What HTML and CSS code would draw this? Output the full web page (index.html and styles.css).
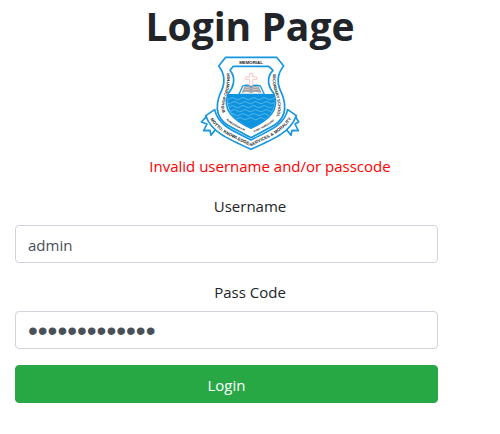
FILE: index.html
```html
<!DOCTYPE html>
<html lang="en">
<head>
<meta charset="utf-8">
<meta name="viewport" content="width=device-width, initial-scale=1">
<title>Login Page</title>
<link rel="stylesheet" href="styles.css">
</head>
<body>
<main class="container">
  <h1 class="title">Login Page</h1>
  <svg class="crest" viewBox="15 18 303 285" role="img" aria-label="School crest">
    <defs>
      <path id="left-side" d="M91 186C76 158 114 123 102 62"/>
      <path id="right-side" d="M235 71C225 123 262 147 244 200"/>
      <path id="lower-left" d="M94 210Q118 232 166 249"/>
      <path id="lower-right" d="M178 247Q218 230 250 203"/>
      <path id="motto" d="M46 207C68 248 118 263 168 289C218 263 268 248 298 192"/>
      <clipPath id="inner"><path d="M98 132H239C246 183 220 211 168 233C116 211 91 183 98 132Z"/></clipPath>
    </defs>
    <g class="outline">
      <path d="M35 199L19 216L36 222L26 242L45 241L48 256L62 238Z"/>
      <path d="M301 199L311 216L300 222L310 242L291 241L288 256L274 238Z"/>
      <path d="M92 22H245L266 48C242 77 246 104 261 132C279 178 265 209 239 225L168 263L97 225C71 209 57 178 75 132C90 104 94 77 71 48Z"/>
      <path d="M59 179L32 197C49 244 92 264 168 298C244 264 287 244 304 197L278 179C267 228 221 242 168 270C115 242 70 228 59 179Z"/>
      <path d="M66 176C73 224 122 236 168 263C214 236 263 224 270 176" class="fold"/>
      <path d="M115 49H221L234 61C211 85 221 112 236 130C257 180 220 211 168 235C116 211 79 180 100 130C115 112 125 85 105 61Z"/>
    </g>
    <g clip-path="url(#inner)">
      <path class="water" d="M90 132H250V240H90Z"/>
      <g class="waves">
        <path d="M88 146q8 7 16 0t16 0 16 0 16 0 16 0 16 0 16 0 16 0 16 0 16 0"/>
        <path d="M94 158q8 7 16 0t16 0 16 0 16 0 16 0 16 0 16 0 16 0 16 0"/>
        <path d="M88 170q8 7 16 0t16 0 16 0 16 0 16 0 16 0 16 0 16 0 16 0"/>
        <path d="M94 182q8 7 16 0t16 0 16 0 16 0 16 0 16 0 16 0 16 0 16 0"/>
        <path d="M88 194q8 7 16 0t16 0 16 0 16 0 16 0 16 0 16 0 16 0 16 0"/>
        <path d="M110 206q8 7 16 0t16 0 16 0 16 0 16 0 16 0 16 0"/>
      </g>
    </g>
    <path class="book-cover" d="M132 133L143 108Q156 103 168 109Q181 103 196 108L208 133Z"/>
    <path class="book-page" d="M142 127L149 111Q158 107 168 113Q179 107 190 111L198 127Q181 121 168 127Q155 121 142 127Z"/>
    <path class="book-lines" d="M148 117q11-4 20 1q11-5 24-1M146 123q12-4 22 0q14-4 27 0M168 112V128"/>
    <path class="cross" d="M164 70h9v11h12v8h-12v18h-9V89h-12v-8h12Z"/>
    <g class="lettering">
      <text x="168" y="41" class="top-name">MEMORIAL</text>
      <text class="side-name"><textPath href="#left-side">BISHOP CROWTHER</textPath></text>
      <text class="side-name"><textPath href="#right-side">SECONDARY SCHOOL</textPath></text>
      <text class="place"><textPath href="#lower-left">RUMUOBIOKANI</textPath></text>
      <text class="place"><textPath href="#lower-right">PORT HARCOURT</textPath></text>
      <text class="motto"><textPath href="#motto">MOTTO: KNOWLEDGE, SERVICES &amp; MORALITY</textPath></text>
    </g>
  </svg>
  <ul class="errors"><li>Invalid username and/or passcode</li></ul>
  <form>
    <div class="field">
      <label for="username">Username</label>
      <input class="control" id="username" name="username" type="text" value="admin">
    </div>
    <div class="field">
      <label for="passcode">Pass Code</label>
      <input class="control passcode" id="passcode" name="passcode" type="password" value="passcode12345">
    </div>
    <button class="submit" type="submit">Login</button>
  </form>
</main>
</body>
</html>
```
FILE: styles.css
```css
*, *::before, *::after { box-sizing: border-box; }

body {
  margin: 0;
  background: #fff;
  color: #212529;
  font: 15px/26px "Open Sans", "Noto Sans", sans-serif;
}

.container { padding: 0 15px; text-align: center; }

.title { margin: 0 0 4px; font-size: 39px; font-weight: 700; line-height: 52px; }

.crest { display: block; width: 101px; height: 95px; margin: 0 auto 2px; }

.outline { fill: #fff; stroke: #1496e1; stroke-width: 5; stroke-linejoin: round; }
.outline .fold { fill: none; stroke-width: 3; }
.water { fill: #0e94df; }
.waves { fill: none; stroke: #7cc4ed; stroke-width: 2; }
.book-cover { fill: #fff; stroke: #1496e1; stroke-width: 4; }
.book-page { fill: #ccc; stroke: #777; stroke-width: 2; }
.book-lines { fill: none; stroke: #888; stroke-width: 2; }
.cross { fill: #fff; stroke: #f4a9a6; stroke-width: 2; }
.lettering { fill: #222; font-family: "Liberation Sans", sans-serif; font-weight: 700; }
.top-name { font-size: 13px; text-anchor: middle; }
.side-name { font-size: 12px; }
.place { font-size: 8px; }
.motto { font-size: 13px; }

.errors { margin: 0 0 14px; padding: 0 0 0 40px; color: #f00; list-style: none; }

.field { margin-bottom: 16px; }
.field label { display: block; margin-bottom: 6px; }

.control, .submit {
  display: block;
  width: 90%;
  height: 38px;
  padding: 7px 12px 5px;
  border: 1px solid #ced4da;
  border-radius: 4px;
  font: inherit;
  line-height: 24px;
}

.control { background: #fff; color: #495057; }
.passcode { font-family: "Liberation Sans", sans-serif; font-size: 28px; }

.submit { border-color: #28a745; background: #28a745; color: #fff; }
```
